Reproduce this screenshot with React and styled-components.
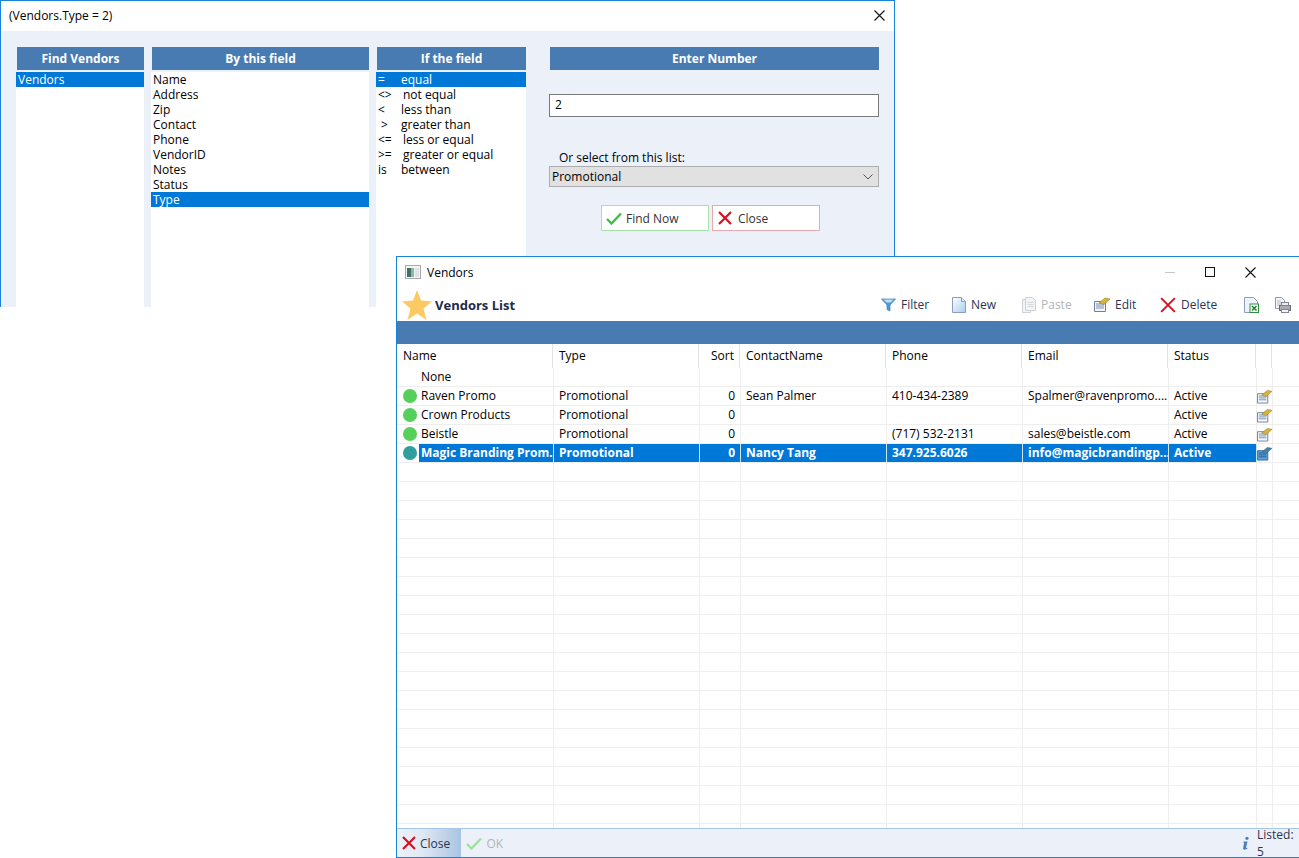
import React from "react";
import styled, { createGlobalStyle } from "styled-components";

const Global = createGlobalStyle`
  html, body { margin: 0; padding: 0; background: #fff; overflow: hidden; }
  * { box-sizing: border-box; }
  body { font-family: "Open Sans", "Noto Sans", sans-serif; font-size: 12px; color: #000; }
`;

const Desktop = styled.div`
  position: relative;
  width: 1299px;
  height: 858px;
  overflow: hidden;
  background: #fff;
`;

const Dialog = styled.section`
  position: absolute;
  left: 0;
  top: 0;
  width: 895px;
  height: 307px;
  border: 1px solid #1883d7;
  border-bottom: 0;
  background: #ecf1f9;
  display: flex;
  flex-direction: column;
`;

const DialogTitle = styled.header`
  height: 30px;
  flex: none;
  background: #fff;
  display: flex;
  align-items: center;
  justify-content: space-between;
  padding: 0 9px 2px 8px;
  font-size: 12px;
`;

const DialogBody = styled.div`
  flex: 1;
  min-height: 0;
  display: flex;
  gap: 7px;
  padding: 16px 0 0 15px;
`;

const Column = styled.div`
  width: ${(p) => p.$w}px;
  margin-left: ${(p) => p.$ml || 0}px;
  display: flex;
  flex-direction: column;
`;

const ColHead = styled.div`
  height: 23px;
  flex: none;
  margin-left: ${(p) => p.$flush ? 0 : 1}px;
  background: #487bb1;
  color: #fff;
  font-weight: 700;
  font-size: 12px;
  display: flex;
  align-items: center;
  justify-content: center;
`;

const List = styled.ul`
  list-style: none;
  margin: 2px 0 0;
  padding: 0;
  flex: 1;
  background: #fff;
`;

const ListItem = styled.li`
  height: 15px;
  line-height: 15px;
  padding-left: 2px;
  white-space: pre;
  background: ${(p) => (p.$on ? "#0078d7" : "transparent")};
  color: ${(p) => (p.$on ? "#fff" : "#000")};
`;

const OpSym = styled.span`
  display: inline-block;
  width: ${(p) => (p.$wide ? 25 : 23)}px;
`;

const NumberInput = styled.div`
  height: 23px;
  margin-top: 24px;
  border: 1px solid #7a7a7a;
  background: #fff;
  line-height: 20px;
  padding-left: 5px;
`;

const PickLabel = styled.div`
  margin-top: 32px;
  height: 17px;
  line-height: 17px;
  padding-left: 10px;
`;

const Select = styled.div`
  height: 21px;
  border: 1px solid #adadad;
  background: #e1e1e1;
  display: flex;
  align-items: center;
  justify-content: space-between;
  padding: 0 5px 0 2px;
`;

const ActionRow = styled.div`
  display: flex;
  gap: 3px;
  margin-top: 18px;
  padding-left: 52px;
`;

const ActionButton = styled.div`
  width: 108px;
  height: 26px;
  background: #fff;
  border: 1px solid ${(p) => p.$edge};
  display: flex;
  align-items: center;
  gap: ${(p) => p.$gap}px;
  padding-left: ${(p) => p.$pad}px;
  color: #333;
`;

const Win = styled.section`
  position: absolute;
  left: 396px;
  top: 256px;
  width: 904px;
  height: 602px;
  border: 1px solid #1883d7;
  background: #fff;
  display: flex;
  flex-direction: column;
`;

const WinTitle = styled.header`
  height: 31px;
  flex: none;
  display: flex;
  align-items: center;
  padding: 0 0 1px 8px;
  gap: 6px;
`;

const WinControls = styled.div`
  margin-left: auto;
  display: flex;
  align-items: center;
  width: 115px;
  padding-left: 0;
  margin-right: 19px;
  gap: 30px;
`;

const Toolbar = styled.div`
  height: 33px;
  flex: none;
  display: flex;
  align-items: center;
  padding-left: 5px;
`;

const Brand = styled.div`
  width: 479px;
  display: flex;
  align-items: center;
  gap: 3px;
  font-weight: 700;
  font-size: 13px;
  color: #1d2b4a;
`;

const Tool = styled.div`
  width: ${(p) => p.$w}px;
  flex: none;
  display: flex;
  align-items: center;
  gap: 5px;
  color: ${(p) => (p.$off ? "#b4b4b4" : "#2a3550")};
`;

const Band = styled.div`
  height: 23px;
  flex: none;
  background: #487bb1;
`;

const HeadRow = styled.div`
  height: 24px;
  flex: none;
  display: grid;
  grid-template-columns: 156px 146px 41px 146px 136px 146px 88px 16px;
`;

const HeadCell = styled.div`
  border-right: 1px solid #e3e3e3;
  padding: 0 5px 0 6px;
  line-height: 23px;
  text-align: ${(p) => (p.$right ? "right" : "left")};
`;

const Rows = styled.div`
  flex: 1;
  min-height: 0;
  overflow: hidden;
`;

const Row = styled.div`
  height: 19px;
  border-bottom: 1px solid #eeeeee;
  display: grid;
  grid-template-columns: 157px 146px 41px 146px 136px 146px 88px 16px;
  font-weight: ${(p) => (p.$on ? 700 : 400)};
`;

const Cell = styled.div`
  height: 18px;
  line-height: 18px;
  border-right: 1px solid ${(p) => (p.$on ? "#cfe4f6" : "#eeeeee")};
  padding: 0 5px;
  white-space: nowrap;
  overflow: hidden;
  text-align: ${(p) => (p.$right ? "right" : "left")};
  background: ${(p) => (p.$on ? "#0078d7" : "transparent")};
  color: ${(p) => (p.$on ? "#fff" : "#000")};
`;

const NameCell = styled.div`
  height: 18px;
  line-height: 18px;
  border-right: 1px solid ${(p) => (p.$on ? "#cfe4f6" : "#eeeeee")};
  display: flex;
  align-items: center;
  padding-left: 6px;
`;

const Dot = styled.span`
  width: 14px;
  height: 14px;
  flex: none;
  border-radius: 50%;
  background: ${(p) => p.$color};
  visibility: ${(p) => (p.$color ? "visible" : "hidden")};
`;

const NameText = styled.span`
  flex: 1;
  height: 18px;
  margin-left: 2px;
  padding-left: 2px;
  white-space: nowrap;
  overflow: hidden;
  background: ${(p) => (p.$on ? "#0078d7" : "transparent")};
  color: ${(p) => (p.$on ? "#fff" : "#000")};
`;

const IconCell = styled.div`
  height: 18px;
  border-right: 1px solid #eeeeee;
  display: flex;
  align-items: center;
  padding-left: 0;
`;

const Footer = styled.footer`
  height: 29px;
  flex: none;
  border-top: 1px solid #a6c6e8;
  background: #ecf1f9;
  display: flex;
  align-items: stretch;
`;

const FootButton = styled.div`
  width: ${(p) => p.$w}px;
  display: flex;
  align-items: center;
  gap: 4px;
  padding-left: 5px;
  color: ${(p) => (p.$off ? "#b4b4b4" : "#2a3550")};
  background: ${(p) => (p.$active ? "linear-gradient(90deg, #ecf1f9 0%, #dfe8f4 40%, #a9c4e2 100%)" : "transparent")};
`;

const FootStatus = styled.div`
  margin-left: 716px;
  display: flex;
  align-items: center;
  gap: 8px;
  color: #2a3550;
`;

const CloseX = ({ size = 11 }) => (
  <svg width={size} height={size} viewBox="0 0 11 11" fill="none" stroke="#111" strokeWidth="1.1">
    <path d="M.5.5l10 10M10.5.5l-10 10" />
  </svg>
);
const RedX = ({ size = 14, sw = 2.2 }) => (
  <svg width={size} height={size} viewBox="0 0 14 14" fill="none" stroke="#d8101c" strokeWidth={sw}>
    <path d="M1 1l12 12M13 1L1 13" />
  </svg>
);
const Check = ({ c = "#3cc043" }) => (
  <svg width="16" height="13" viewBox="0 0 16 13" fill="none" stroke={c} strokeWidth="2.4">
    <path d="M1 7l4.5 4.5L15 1.5" />
  </svg>
);
const Chevron = () => (
  <svg width="10" height="6" viewBox="0 0 10 6" fill="none" stroke="#555" strokeWidth="1">
    <path d="M.5.5L5 5 9.5.5" />
  </svg>
);
const WinGlyph = () => (
  <svg width="16" height="15" viewBox="0 0 16 15">
    <rect x=".5" y=".5" width="15" height="13" fill="#f4f4f4" stroke="#a9a9a9" />
    <rect x="2" y="3" width="4" height="9" fill="#3f6f6a" />
    <rect x="6" y="3" width="3" height="9" fill="#8fb7a8" />
    <rect x="10" y="3" width="4" height="9" fill="#dfe3e6" />
  </svg>
);
const Star = () => (
  <svg width="30" height="30" viewBox="0 0 30 30">
    <polygon points="15,0 19,10.5 30,11.5 21.5,18.5 24.5,30 15,23.5 5.5,30 8.5,18.5 0,11.5 11,10.5" fill="#fcc962" />
  </svg>
);
const Funnel = () => (
  <svg width="15" height="14" viewBox="0 0 15 14">
    <path d="M.5 1h14L9 7v6l-3-1.5V7z" fill="#4f9ad6" stroke="#3d7fb5" strokeWidth=".7" />
    <path d="M2.5 1.6h10L9.5 4.5h-4z" fill="#bfe0f6" />
  </svg>
);
const NewDoc = () => (
  <svg width="14" height="16" viewBox="0 0 14 16">
    <defs>
      <linearGradient id="nd" x1="0" y1="0" x2="1" y2="1">
        <stop offset="0" stopColor="#fff" />
        <stop offset="1" stopColor="#a8cdf0" />
      </linearGradient>
    </defs>
    <path d="M.5.5h9l4 4v11H.5z" fill="url(#nd)" stroke="#8e9cc4" />
    <path d="M9.5.5v4h4" fill="#dce8f6" stroke="#8e9cc4" />
  </svg>
);
const PasteDoc = () => (
  <svg width="14" height="16" viewBox="0 0 14 16" fill="#f2f4f6" stroke="#ccd2d8">
    <path d="M.5 2.5h8v13h-8z" />
    <path d="M3.5.5h7l3 3v10h-10z" />
    <path d="M5.5 5.5h6M5.5 7.5h6M5.5 9.5h6" strokeWidth=".8" />
  </svg>
);
const EditGlyph = ({ on }) => (
  <svg width="16" height="15" viewBox="0 0 16 15">
    <path d="M.5 4.5h11v10H.5z" fill={on ? "#5f9fd8" : "#f6f6f6"} stroke={on ? "#3b6f9e" : "#6f7f95"} />
    <path d="M2 7h8M2 9h8M2 11h8" stroke={on ? "#2b5f96" : "#6f8fc0"} strokeWidth="1" />
    <path d="M5 6L11 1l5 1-6 5.5z" fill={on ? "#4b7f9f" : "#d9b23c"} stroke={on ? "#3b6f8e" : "#9a7f2a"} strokeWidth=".6" />
  </svg>
);
const DeleteX = () => <RedX size={16} sw={1.7} />;
const ExcelDoc = () => (
  <svg width="15" height="16" viewBox="0 0 15 16">
    <path d="M.5.5h9l4 4v11H.5z" fill="#eef4fb" stroke="#8e9cc4" />
    <rect x="6" y="7" width="8.5" height="8.5" fill="#fff" stroke="#2f8f3f" />
    <path d="M8 9l4.5 4.5M12.5 9L8 13.5" stroke="#1f7f32" strokeWidth="1.5" />
  </svg>
);
const PrintDoc = () => (
  <svg width="16" height="16" viewBox="0 0 16 16">
    <path d="M.5.5h6l3 3v8h-9z" fill="#f4f6f9" stroke="#8e99a8" />
    <path d="M2 4h4M2 6h5M2 8h5" stroke="#a5afbd" strokeWidth=".8" />
    <rect x="4.5" y="8.5" width="11" height="5" fill="#a9adb3" stroke="#666c75" />
    <rect x="6.5" y="5.5" width="7" height="3" fill="#eee" stroke="#80868f" />
    <rect x="6.5" y="12.5" width="7" height="3" fill="#f6f6f6" stroke="#80868f" />
  </svg>
);
const InfoGlyph = () => (
  <svg width="8" height="15" viewBox="0 0 8 15" fill="#4a7fc0">
    <circle cx="5.5" cy="1.8" r="1.8" />
    <path d="M2 5.2h4.2L4.5 12c-.1.6.4.7 1.6.2l-.2 1.2C4 14.6.9 15 1.2 12.4L2.4 7 1.4 6.600z" />
  </svg>
);
const MinDash = () => (
  <svg width="10" height="1" viewBox="0 0 10 1"><rect width="10" height="1" fill="#c8c8c8" /></svg>
);
const MaxBox = () => (
  <svg width="10" height="10" viewBox="0 0 10 10" fill="none" stroke="#111"><rect x=".5" y=".5" width="9" height="9" /></svg>
);

const fields = ["Name", "Address", "Zip", "Contact", "Phone", "VendorID", "Notes", "Status", "Type"];
const ops = [
  ["=", "equal"],
  ["<>", "not equal", true],
  ["<", "less than"],
  [" >", "greater than"],
  ["<=", "less or equal", true],
  [">=", "greater or equal", true],
  ["is", "between"],
];
const heads = ["Name", "Type", "Sort", "ContactName", "Phone", "Email", "Status", ""];
const vendors = [
  { name: "None", icon: false },
  { name: "Raven Promo", type: "Promotional", sort: "0", contact: "Sean Palmer", phone: "410-434-2389", email: "Spalmer@ravenpromo....", status: "Active", dot: "#55d05a", icon: true },
  { name: "Crown Products", type: "Promotional", sort: "0", status: "Active", dot: "#55d05a", icon: true },
  { name: "Beistle", type: "Promotional", sort: "0", phone: "(717) 532-2131", email: "sales@beistle.com", status: "Active", dot: "#55d05a", icon: true },
  { name: "Magic Branding Prom...", type: "Promotional", sort: "0", contact: "Nancy Tang", phone: "347.925.6026", email: "info@magicbrandingp...", status: "Active", dot: "#2e9e9e", icon: true, on: true },
];
const rows = [...vendors, ...Array.from({ length: 20 }, () => ({}))];

export default function App() {
  return (
    <Desktop>
      <Global />
      <Dialog>
        <DialogTitle>
          <span>(Vendors.Type = 2)</span>
          <CloseX />
        </DialogTitle>
        <DialogBody>
          <Column $w={128}>
            <ColHead>Find Vendors</ColHead>
            <List><ListItem $on>Vendors</ListItem></List>
          </Column>
          <Column $w={218}>
            <ColHead>By this field</ColHead>
            <List>
              {fields.map((f) => <ListItem key={f} $on={f === "Type"}>{f}</ListItem>)}
            </List>
          </Column>
          <Column $w={150}>
            <ColHead>If the field</ColHead>
            <List>
              {ops.map(([s, l, w], i) => (
                <ListItem key={l} $on={i === 0}><OpSym $wide={w}>{s}</OpSym>{l}</ListItem>
              ))}
            </List>
          </Column>
          <Column $w={330} $ml={16}>
            <ColHead>Enter Number</ColHead>
            <NumberInput>2</NumberInput>
            <PickLabel>Or select from this list:</PickLabel>
            <Select>Promotional<Chevron /></Select>
            <ActionRow>
              <ActionButton $edge="#a9e2a9" $pad={4} $gap={4}><Check />Find Now</ActionButton>
              <ActionButton $edge="#e8a9b0" $pad={5} $gap={6}><RedX />Close</ActionButton>
            </ActionRow>
          </Column>
        </DialogBody>
      </Dialog>

      <Win>
        <WinTitle>
          <WinGlyph />
          <span>Vendors</span>
          <WinControls>
            <MinDash />
            <MaxBox />
            <CloseX />
          </WinControls>
        </WinTitle>
        <Toolbar>
          <Brand><Star />Vendors List</Brand>
          <Tool $w={71}><Funnel />Filter</Tool>
          <Tool $w={70}><NewDoc />New</Tool>
          <Tool $w={72} $off><PasteDoc />Paste</Tool>
          <Tool $w={66}><EditGlyph />Edit</Tool>
          <Tool $w={84}><DeleteX />Delete</Tool>
          <Tool $w={31}><ExcelDoc /></Tool>
          <Tool $w={24}><PrintDoc /></Tool>
        </Toolbar>
        <Band />
        <HeadRow>
          {heads.map((h, i) => <HeadCell key={i} $right={h === "Sort"}>{h}</HeadCell>)}
        </HeadRow>
        <Rows>
          {rows.map((r, i) => (
            <Row key={i} $on={r.on}>
              <NameCell $on={r.on}>
                <Dot $color={r.dot} />
                <NameText $on={r.on}>{r.name}</NameText>
              </NameCell>
              <Cell $on={r.on}>{r.type}</Cell>
              <Cell $on={r.on} $right>{r.sort}</Cell>
              <Cell $on={r.on}>{r.contact}</Cell>
              <Cell $on={r.on}>{r.phone}</Cell>
              <Cell $on={r.on}>{r.email}</Cell>
              <Cell $on={r.on}>{r.status}</Cell>
              <IconCell>{r.icon && <EditGlyph on={r.on} />}</IconCell>
            </Row>
          ))}
        </Rows>
        <Footer>
          <FootButton $w={70} $active><RedX />Close</FootButton>
          <FootButton $w={70} $off><Check c="#9fe0a3" />OK</FootButton>
          <FootStatus><InfoGlyph />Listed: 5</FootStatus>
        </Footer>
      </Win>
    </Desktop>
  );
}
